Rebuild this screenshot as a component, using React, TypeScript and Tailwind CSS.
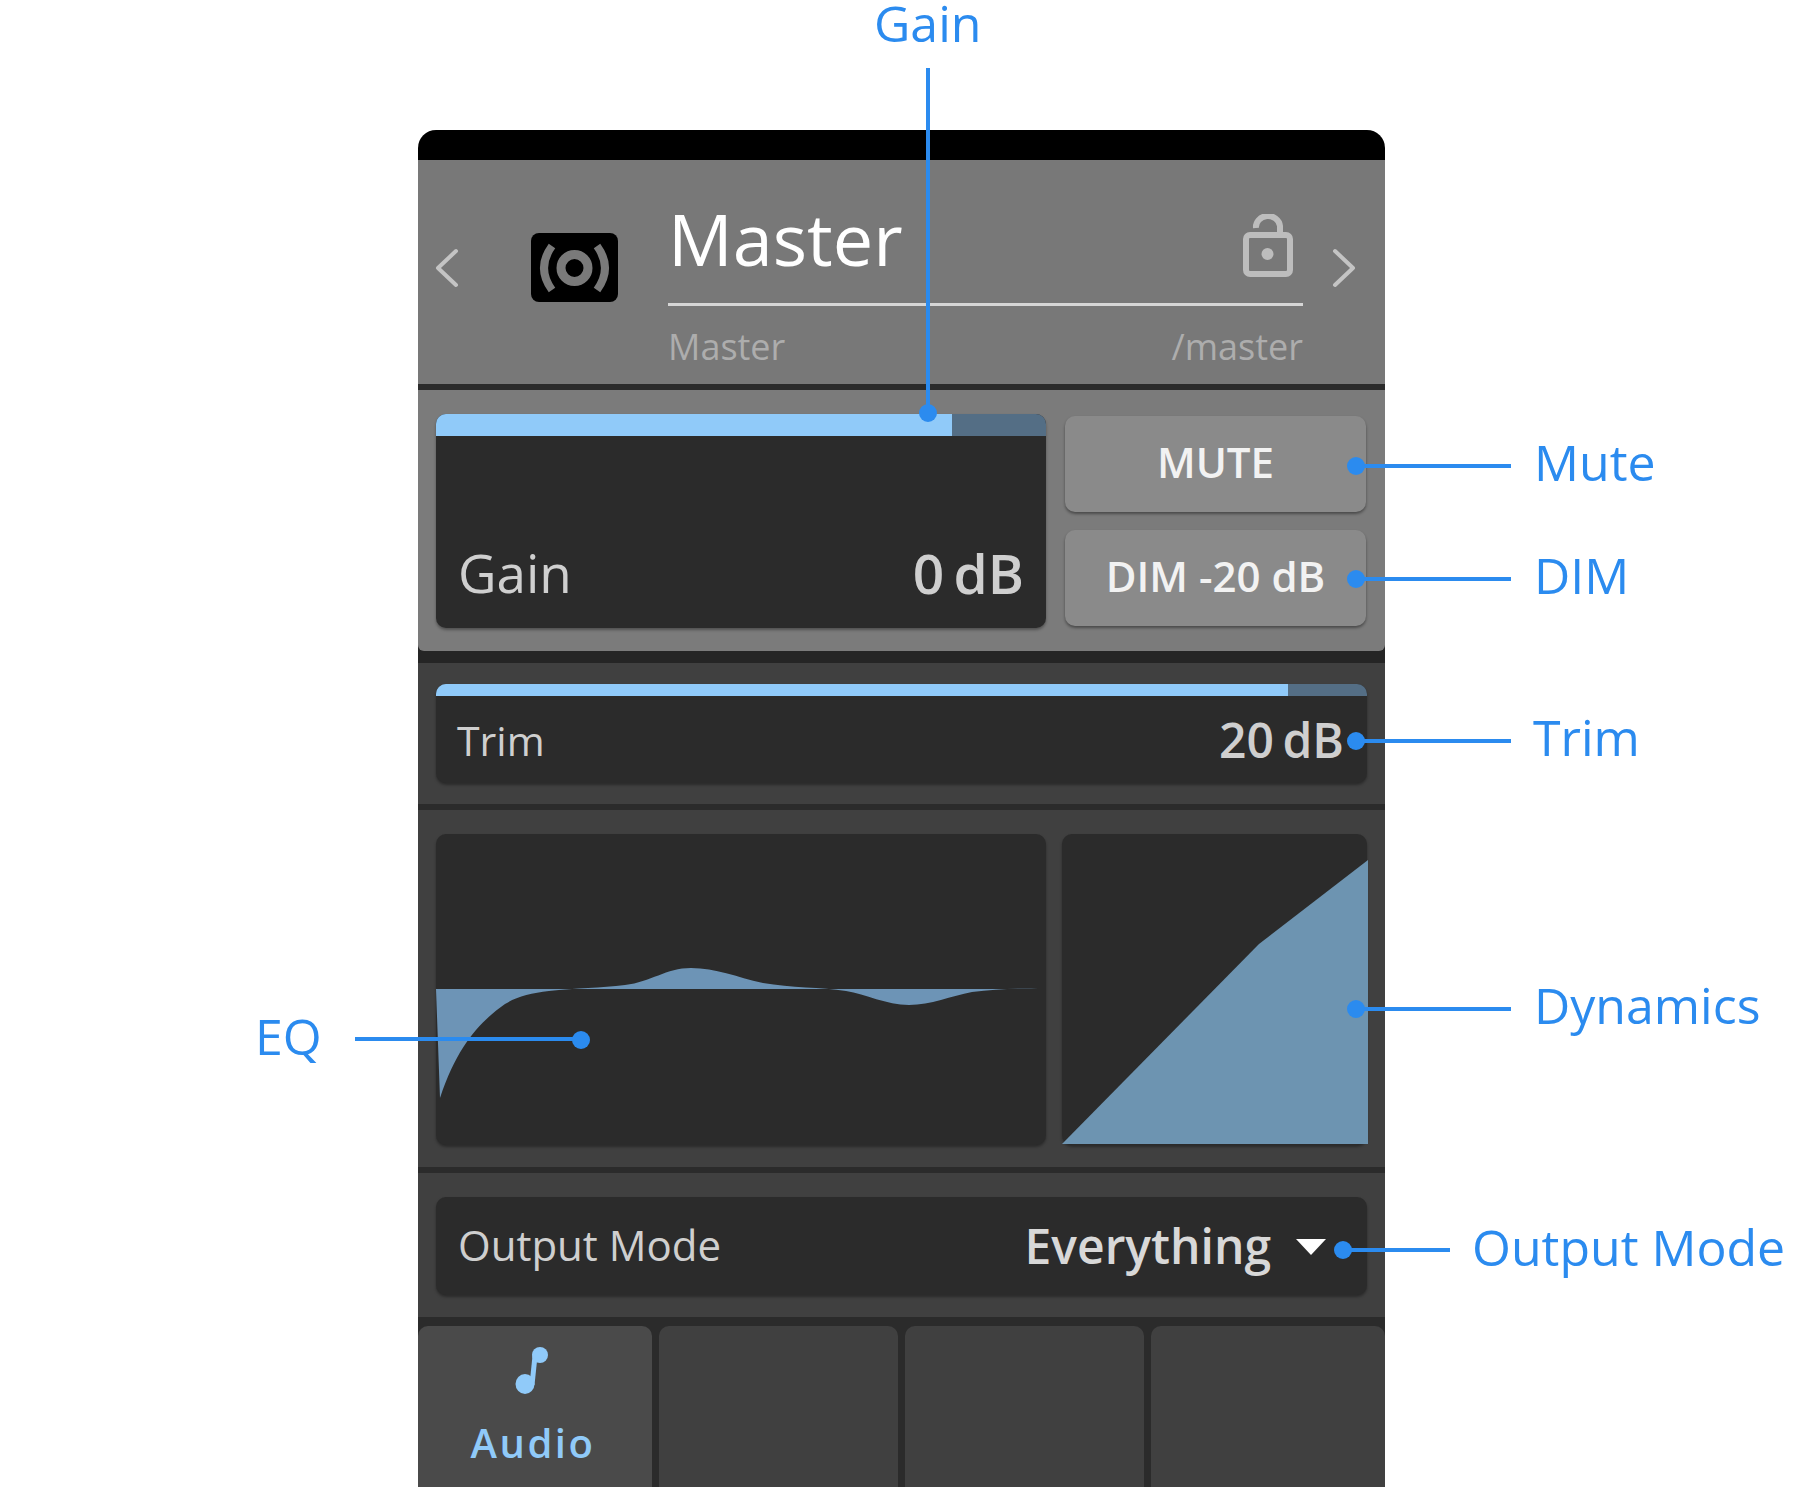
const FONT = "font-['Open_Sans','Noto_Sans',sans-serif]";

// callout markers drawn over the panel
const Dot = ({ className }: { className: string }) => (
  <span className={`absolute h-[18px] w-[18px] rounded-full bg-[#2b8bef] ${className}`} />
);
const Line = ({ className }: { className: string }) => <span className={`absolute bg-[#2b8bef] ${className}`} />;
const Label = ({ className, children }: { className: string; children: string }) => (
  <span className={`absolute text-[50px] leading-[44px] whitespace-nowrap text-[#2b8bef] ${className}`}>{children}</span>
);

const Slider = ({ fill, barH, children, className }: { fill: string; barH: string; children: React.ReactNode; className: string }) => (
  <div className={`flex flex-col overflow-hidden rounded-[10px] bg-[#2b2b2b] shadow-[0_2px_3px_rgba(0,0,0,0.35)] ${className}`}>
    <div className={`flex shrink-0 bg-[#546e85] ${barH}`}>
      <div className={`bg-[#90caf9] ${fill}`} />
    </div>
    {children}
  </div>
);

const Chevron = ({ d, className }: { d: string; className: string }) => (
  <svg viewBox="0 0 24 40" fill="none" className={className}>
    <path d={d} stroke="#c4c4c4" strokeWidth="4" strokeLinecap="round" strokeLinejoin="round" />
  </svg>
);

const Header = () => (
  <div className="flex h-[224px] bg-[#787878]">
    <Chevron d="M21 3 L3 20 L21 37" className="mt-[88px] ml-[17px] h-[40px] w-[24px]" />
    <svg viewBox="0 0 87 69" className="mt-[73px] ml-[72px] h-[69px] w-[87px]">
      <rect width="87" height="69" rx="8" fill="#000" />
      <circle cx="43.5" cy="35" r="13.5" fill="none" stroke="#7a7a7a" strokeWidth="9" />
      <path d="M21 13 Q5 35 21 57" fill="none" stroke="#7a7a7a" strokeWidth="8" />
      <path d="M66 13 Q82 35 66 57" fill="none" stroke="#7a7a7a" strokeWidth="8" />
    </svg>
    <div className="ml-[50px] flex h-full w-[635px] flex-col">
      <div className="flex h-[146px] shrink-0 items-start justify-between border-b-[3px] border-[#d6d6d6]">
        <span className="mt-[29px] text-[72px] leading-[98px] text-white">Master</span>
        <svg viewBox="0 0 50 63" fill="none" className="mt-[54px] mr-[10px] h-[63px] w-[50px]">
          <rect x="3" y="21" width="44" height="39" rx="4" stroke="#bdbdbd" strokeWidth="6" />
          <path d="M13 14 A12 11 0 0 1 37 12 V21" stroke="#bdbdbd" strokeWidth="6" />
          <circle cx="24.5" cy="40" r="6" fill="#bdbdbd" />
        </svg>
      </div>
      <div className="mt-[17px] flex justify-between text-[36px] leading-[48px] text-[#adadad]">
        <span>Master</span>
        <span>/master</span>
      </div>
    </div>
    <Chevron d="M3 3 L21 20 L3 37" className="mt-[88px] ml-[29px] h-[40px] w-[24px]" />
  </div>
);

const GainRow = () => (
  <div className="flex h-[261px] gap-[19px] rounded-b-[6px] bg-[#7b7b7b] pt-[24px] pl-[18px]">
    <Slider fill="w-[516px]" barH="h-[22px]" className="h-[214px] w-[610px]">
      <div className="mt-[102px] flex items-center justify-between pr-[22px] pl-[22px] text-[53px] leading-[70px] text-[#cfcfcf]">
        <span>Gain</span>
        <span className="text-[55px] font-semibold [word-spacing:-5px]">0 dB</span>
      </div>
    </Slider>
    <div className="flex w-[301px] flex-col gap-[18px] pt-[2px] text-[42px] font-semibold text-[#f2f2f2]">
      <button className="flex h-[96px] items-center justify-center rounded-[10px] bg-[#8a8a8a] pb-[6px] shadow-[0_2px_3px_rgba(0,0,0,0.4)]">MUTE</button>
      <button className="flex h-[96px] items-center justify-center rounded-[10px] bg-[#8a8a8a] pb-[6px] shadow-[0_2px_3px_rgba(0,0,0,0.4)]">DIM -20 dB</button>
    </div>
  </div>
);

const TrimRow = () => (
  <div className="h-[141px] bg-[#404040] px-[18px] pt-[21px]">
    <Slider fill="w-[852px]" barH="h-[12px]" className="h-[99px] w-[931px]">
      <div className="flex items-center justify-between pt-[14px] pr-[23px] pl-[21px] text-[#cfcfcf]">
        <span className="text-[41px] leading-[60px]">Trim</span>
        <span className="text-[48px] leading-[60px] font-semibold [word-spacing:-4px]">20 dB</span>
      </div>
    </Slider>
  </div>
);

const CurvesRow = () => (
  <div className="flex h-[357px] gap-[16px] bg-[#404040] px-[18px] pt-[24px]">
    <div className="h-[311px] w-[610px] rounded-[10px] bg-[#2b2b2b] shadow-[0_2px_3px_rgba(0,0,0,0.35)]">
      <svg viewBox="0 0 610 311" className="h-full w-full">
        <path
          d="M0 155 L602 155 C585 154 560 155 536 158 C515 162 495 171 473 171 C450 171 430 160 410 157 C385 153 355 154 327 149 C300 143 280 134 255 134 C230 134 215 148 189 151 C165 154 140 154 113 157 C95 159 80 163 69 170 C45 187 22 210 4 264 Z"
          fill="#6d94b6"
        />
      </svg>
    </div>
    <div className="h-[311px] w-[305px] rounded-[10px] bg-[#2b2b2b] shadow-[0_2px_3px_rgba(0,0,0,0.35)]">
      <svg viewBox="0 0 305 311" className="h-full w-full overflow-visible">
        <path d="M0 310 L197 110 L306 26 V310 Z" fill="#6d94b1" />
      </svg>
    </div>
  </div>
);

const OutputRow = () => (
  <div className="h-[144px] bg-[#404040] px-[18px] pt-[24px]">
    <div className="flex h-[98px] w-[931px] items-center rounded-[10px] bg-[#2b2b2b] pl-[22px] text-[#cfcfcf] shadow-[0_2px_3px_rgba(0,0,0,0.35)]">
      <span className="pb-[4px] text-[42px]">Output Mode</span>
      <span className="ml-auto text-[48px] font-semibold text-[#d8d8d8]">Everything</span>
      <svg viewBox="0 0 30 16" className="mt-[2px] mr-[41px] ml-[25px] h-[16px] w-[30px]">
        <path d="M0 0 H30 L15 16 Z" fill="#fff" />
      </svg>
    </div>
  </div>
);

const Tabs = () => (
  <div className="flex h-[170px] flex-col bg-[#2b2b2b] pt-[9px]">
    <div className="flex h-[161px] gap-[7px]">
      <div className="flex w-[234px] flex-col items-center rounded-t-[10px] bg-[#4a4a4a]">
        <svg viewBox="0 0 33 47" className="mt-[21px] mr-[8px] h-[47px] w-[33px]">
          <ellipse cx="10" cy="37" rx="9.5" ry="10" fill="#90caf9" />
          <path d="M17 38 L20 9" stroke="#90caf9" strokeWidth="5" fill="none" />
          <circle cx="25" cy="8" r="8" fill="#90caf9" />
        </svg>
        <span className="mt-[22px] mr-[4px] text-[40px] leading-[54px] font-semibold tracking-[2.5px] text-[#90caf9]">Audio</span>
      </div>
      <div className="w-[239px] rounded-t-[10px] bg-[#404040]" />
      <div className="w-[239px] rounded-t-[10px] bg-[#404040]" />
      <div className="w-[234px] rounded-t-[10px] bg-[#404040]" />
    </div>
  </div>
);

export default function App() {
  return (
    <div className={`relative h-[1494px] w-[1801px] overflow-hidden bg-white pt-[130px] pl-[418px] ${FONT}`}>
      <div className="w-[967px]">
        <div className="h-[30px] rounded-t-[18px] bg-black" />
        <Header />
        <div className="h-[6px] bg-[#2b2b2b]" />
        <div className="bg-[#252525] pb-[12px]">
          <GainRow />
        </div>
        <TrimRow />
        <div className="h-[6px] bg-[#2b2b2b]" />
        <CurvesRow />
        <div className="h-[6px] bg-[#2b2b2b]" />
        <OutputRow />
        <Tabs />
      </div>

      {/* callouts */}
      <Label className="top-[1px] left-[874px]">Gain</Label>
      <Line className="top-[68px] left-[926px] h-[345px] w-[4px]" />
      <Dot className="top-[404px] left-[919px]" />

      <Label className="top-[440px] left-[1534px]">Mute</Label>
      <Line className="top-[464px] left-[1356px] h-[4px] w-[155px]" />
      <Dot className="top-[457px] left-[1347px]" />

      <Label className="top-[553px] left-[1534px]">DIM</Label>
      <Line className="top-[577px] left-[1356px] h-[4px] w-[155px]" />
      <Dot className="top-[570px] left-[1347px]" />

      <Label className="top-[715px] left-[1533px]">Trim</Label>
      <Line className="top-[739px] left-[1356px] h-[4px] w-[155px]" />
      <Dot className="top-[732px] left-[1347px]" />

      <Label className="top-[983px] left-[1534px]">Dynamics</Label>
      <Line className="top-[1007px] left-[1356px] h-[4px] w-[155px]" />
      <Dot className="top-[1000px] left-[1347px]" />

      <Label className="top-[1014px] left-[255px]">EQ</Label>
      <Line className="top-[1037px] left-[355px] h-[4px] w-[226px]" />
      <Dot className="top-[1031px] left-[572px]" />

      <Label className="top-[1225px] left-[1472px]">Output Mode</Label>
      <Line className="top-[1248px] left-[1342px] h-[4px] w-[108px]" />
      <Dot className="top-[1241px] left-[1334px]" />
    </div>
  );
}
